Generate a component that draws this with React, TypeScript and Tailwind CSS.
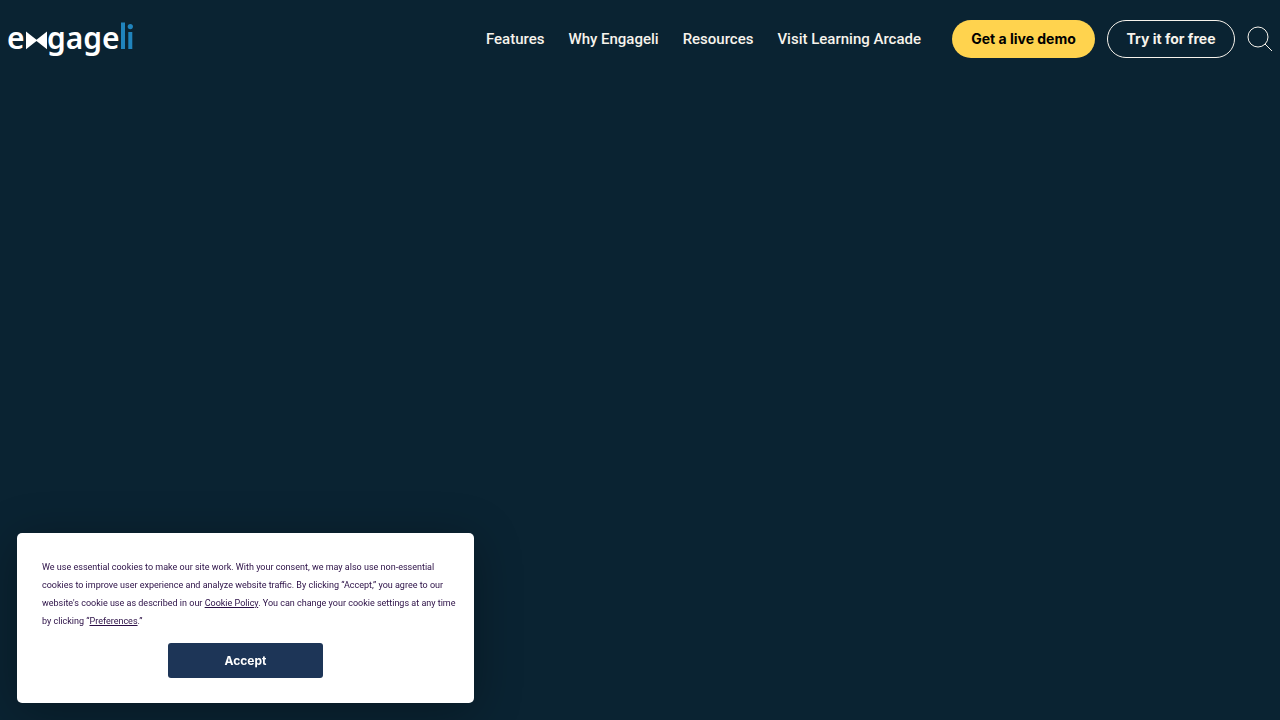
const navItems = ['Features', 'Why Engageli', 'Resources', 'Visit Learning Arcade'];

function Logo() {
  return (
    <svg className="overflow-visible" width="126" height="50" viewBox="0 0 126 50" role="img" aria-label="Engageli">
      <g fontFamily="'Noto Sans', sans-serif" fontSize="30" fontWeight="600">
        <text x="-1" y="34" fill="#ffffff">e</text>
        <text x="39" y="34" fill="#ffffff">gage</text>
      </g>
      <path d="M18 16.600v17.600l10.500-8.200 10.500 8.200V16.600l-10.500 8.200z" fill="#ffffff" />
      <path d="M113 7.600h4v26.400h-4zM120.300 17h4v17h-4z" fill="#2084bd" />
      <circle cx="122.300" cy="11.600" r="2.600" fill="#2084bd" />
    </svg>
  );
}

function SearchIcon() {
  return (
    <svg width="26" height="26" viewBox="0 0 26 26" fill="none" stroke="#f7f3ec" strokeWidth="1" aria-hidden="true">
      <circle cx="11" cy="11" r="10" />
      <path d="M18 18l7 7" />
    </svg>
  );
}

function Header() {
  return (
    <header className="flex h-[78px] items-center justify-between pr-[7px] pl-2">
      <a href="#home" className="pt-[2px]">
        <Logo />
      </a>
      <div className="flex items-center gap-3">
        <nav className="mr-[19px] flex gap-6 font-['Roboto',sans-serif] text-[15px] font-medium whitespace-nowrap text-[#f7f3ec]">
          {navItems.map((item) => (
            <a key={item} href="#nav">{item}</a>
          ))}
        </nav>
        <a href="#demo" className="flex h-[38px] w-[143px] items-center justify-center rounded-full bg-[#ffd34e] pb-[2px] text-[14px] font-bold whitespace-nowrap text-black">
          Get a live demo
        </a>
        <a href="#try" className="flex h-[38px] w-32 items-center justify-center rounded-full border border-[#f7f3ec] pb-[2px] text-[14px] font-bold whitespace-nowrap text-[#f7f3ec]">
          Try it for free
        </a>
        <button type="button" aria-label="Search">
          <SearchIcon />
        </button>
      </div>
    </header>
  );
}

function CookieBanner() {
  return (
    <section aria-label="Cookie consent" className="fixed bottom-[17px] left-[17px] w-[457px] rounded-[5px] bg-white p-[25px] shadow-[0_8px_48px_rgba(0,0,0,0.3)]">
      <p className="font-['Roboto',sans-serif] text-[9px] leading-[18px] whitespace-nowrap text-[#2a0e45]">
        We use essential cookies to make our site work. With your consent, we may also use non-essential<br />
        cookies to improve user experience and analyze website traffic. By clicking “Accept,” you agree to our<br />
        website's cookie use as described in our <a href="#policy" className="underline">Cookie Policy</a>. You can change your cookie settings at any time<br />
        by clicking “<a href="#preferences" className="underline">Preferences</a>.”
      </p>
      <div className="mt-[13px] flex justify-center">
        <button type="button" className="h-[35px] w-[155px] rounded-[3px] bg-[#1d3557] text-[12px] font-bold text-white">
          Accept
        </button>
      </div>
    </section>
  );
}

export default function App() {
  return (
    <div className="min-h-screen bg-[#0a2332] font-['Inter',sans-serif]">
      <Header />
      <CookieBanner />
    </div>
  );
}
